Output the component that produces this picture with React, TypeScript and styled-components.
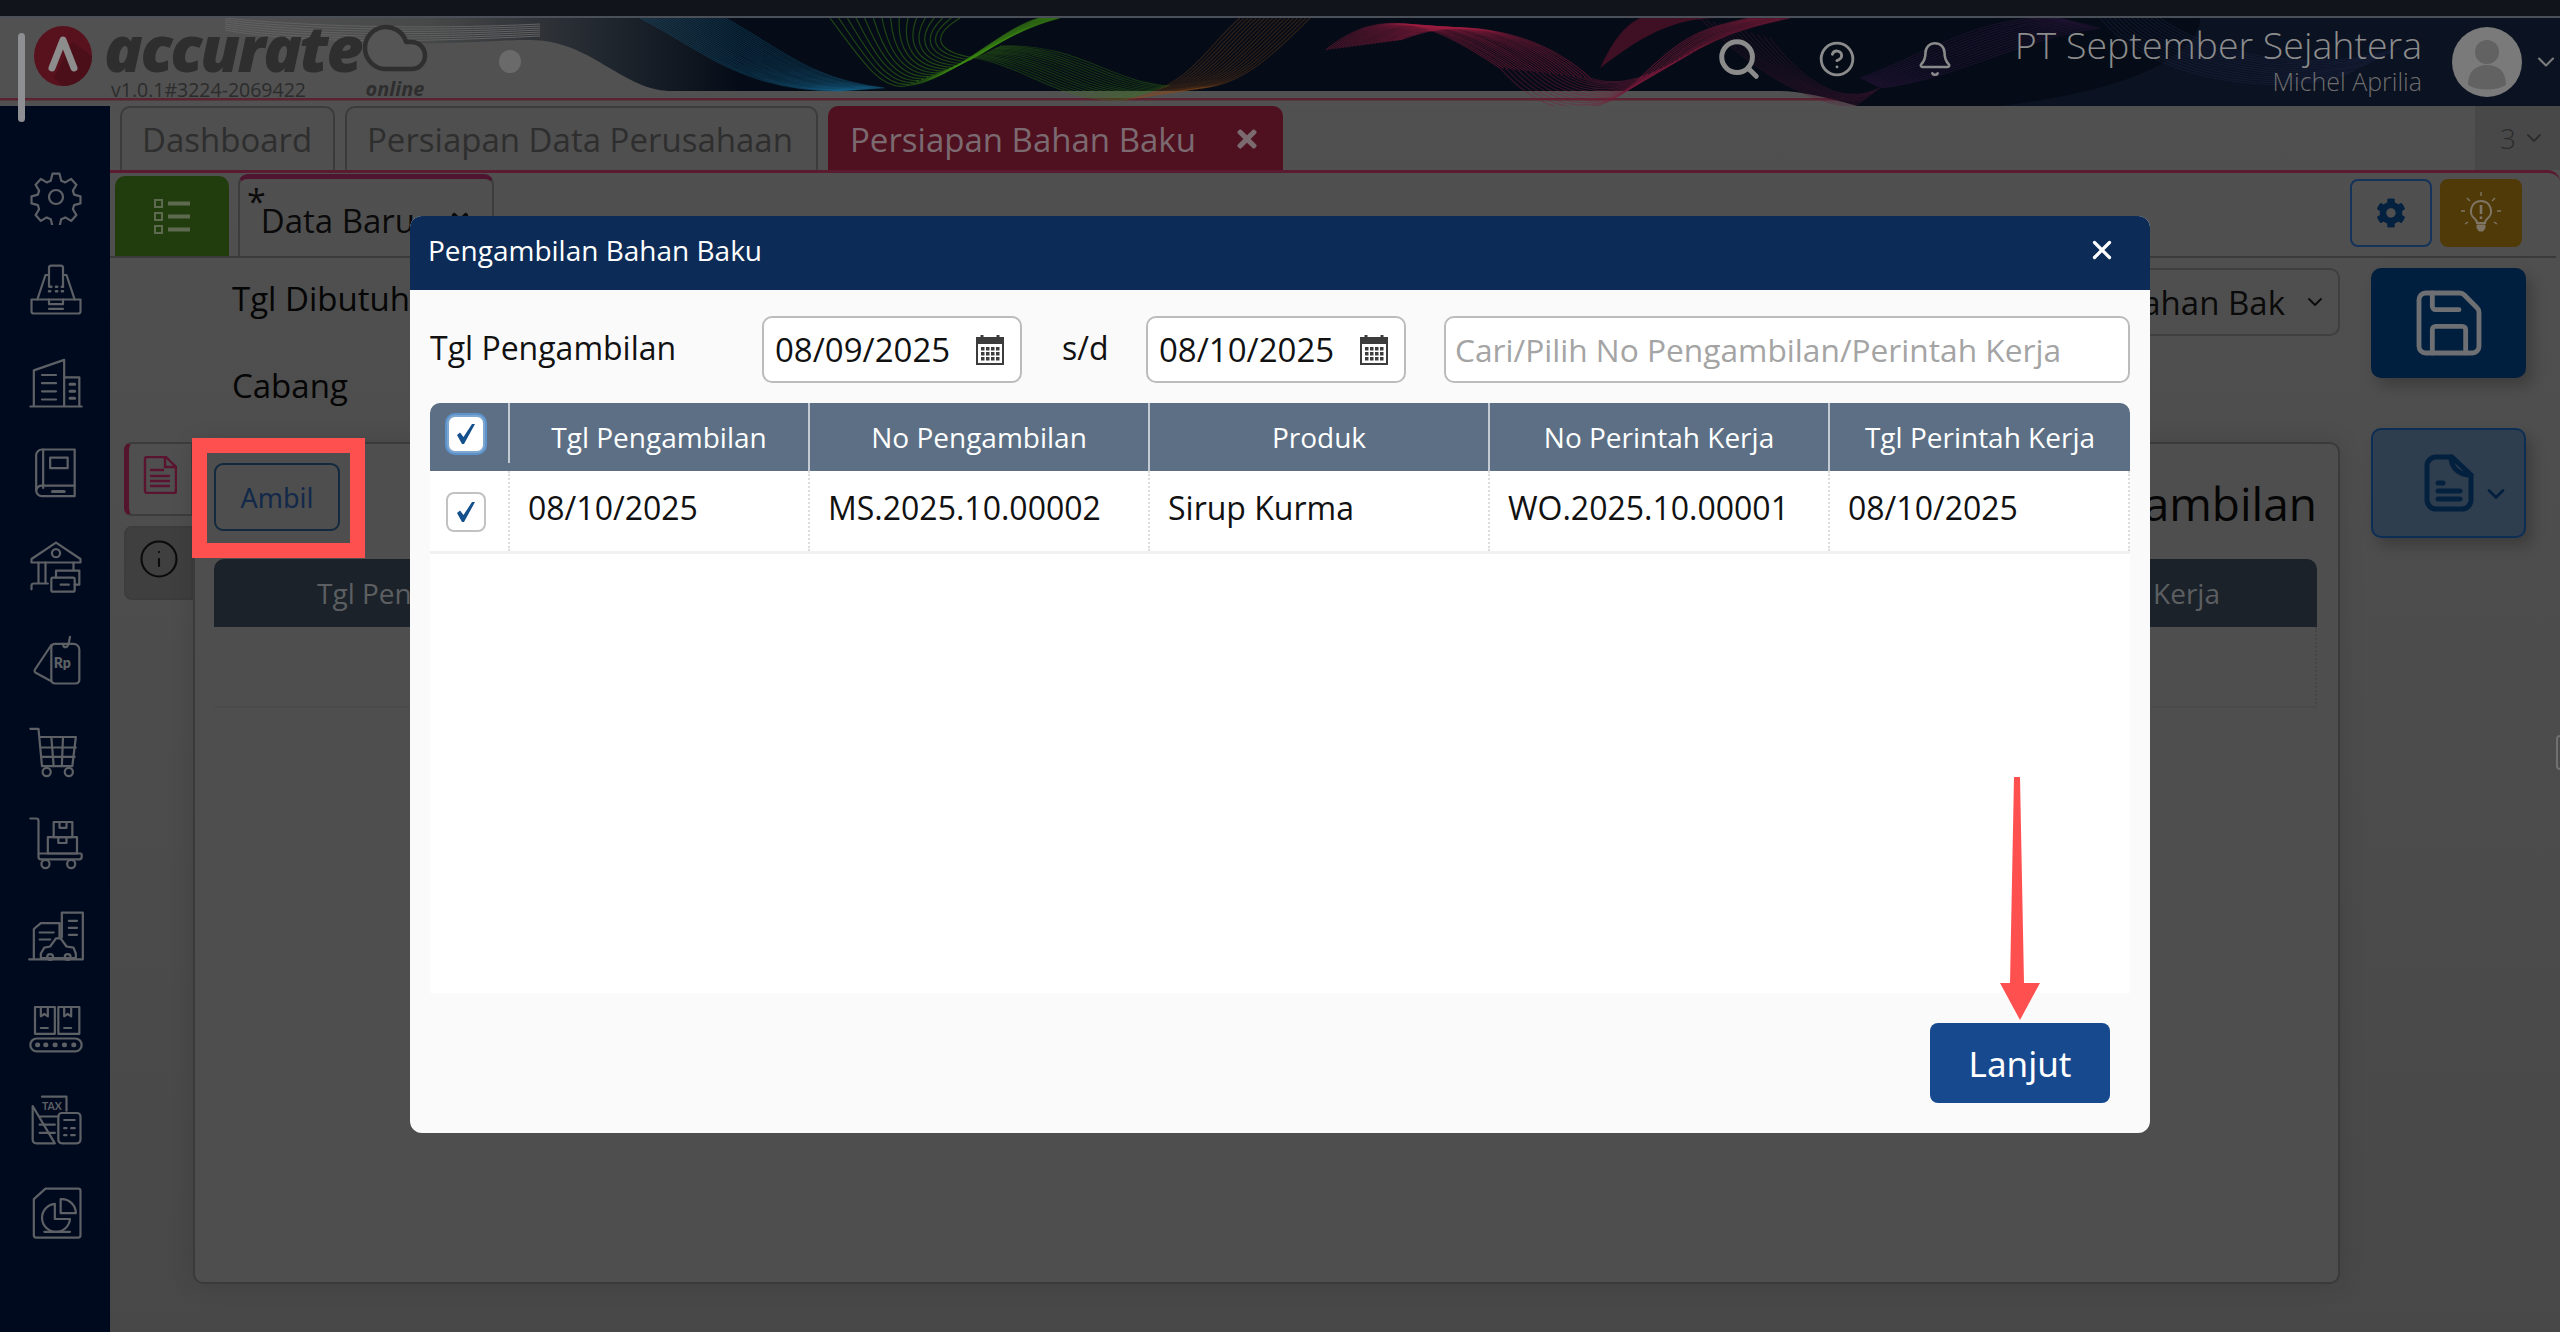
import React from "react";
import styled, { createGlobalStyle } from "styled-components";
import { Search, CircleHelp, Bell, ChevronDown, Save, Info, X, Cloud } from "lucide-react";
import { FaCog, FaTimes } from "react-icons/fa";

const GlobalStyle = createGlobalStyle`
  html, body {
    margin: 0;
    padding: 0;
    background: #fff;
    font-family: "Open Sans", "Noto Sans", sans-serif;
  }
  * { box-sizing: border-box; }
`;

const Page = styled.div`
  position: relative;
  width: 2560px;
  height: 1340px;
  overflow: hidden;
  display: flex;
  flex-direction: column;
  padding-bottom: 8px;
  background: #fff;
`;
const TopStrip = styled.div`
  height: 18px;
  flex: none;
  background: #12141b;
  border-bottom: 2px solid #4b5058;
`;
const Header = styled.header`
  position: relative;
  height: 88px;
  flex: none;
  display: flex;
  align-items: center;
  justify-content: space-between;
  background: #515151;
`;
const HeaderArt = styled.svg`
  position: absolute;
  inset: 0;
  width: 2560px;
  height: 88px;
`;
const LogoGroup = styled.div`
  position: relative;
  display: flex;
  align-items: flex-start;
  padding-left: 34px;
  height: 88px;
`;
const LogoMark = styled.svg`
  width: 58px;
  height: 60px;
  margin-top: 8px;
  flex: none;
`;
const LogoText = styled.div`
  margin-left: 12px;
  width: 258px;
`;
const LogoWord = styled.div`
  font-size: 64px;
  font-weight: 800;
  font-style: italic;
  line-height: 60px;
  height: 60px;
  margin-top: 0;
  color: #2e2e2e;
  letter-spacing: -2.4px;
`;
const Version = styled.div`
  font-size: 19.5px;
  font-weight: 400;
  line-height: 20px;
  margin: 2px 0 0 7px;
  color: #2c2c2c;
  white-space: nowrap;
`;
const CloudBlock = styled.div`
  margin: -6px 0 0 -4px;
  display: flex;
  flex-direction: column;
  align-items: center;
  width: 74px;
`;
const OnlineText = styled.div`
  font-size: 20px;
  font-weight: 700;
  font-style: italic;
  line-height: 18px;
  color: #2e2e2e;
  margin-top: -4px;
`;
const HeaderDot = styled.div`
  width: 22px;
  height: 23px;
  border-radius: 50%;
  background: #6a6a6a;
  margin: 32px 0 0 67px;
`;
const HeaderRight = styled.div`
  position: relative;
  display: flex;
  align-items: center;
  height: 88px;
`;
const HeaderIcon = styled.div<{ $gap: number }>`
  display: flex;
  color: #8b8b8b;
  margin: -6px ${(p) => p.$gap}px 0 0;
`;
const Company = styled.div`
  text-align: right;
  width: 408px;
  margin: -8px 30px 0 0;
`;
const CompanyName = styled.div`
  font-size: 37.5px;
  font-weight: 300;
  line-height: 46px;
  color: #8c8c8c;
  white-space: nowrap;
`;
const UserName = styled.div`
  font-size: 25px;
  font-weight: 300;
  line-height: 26px;
  color: #6e6e6e;
`;
const Avatar = styled.svg`
  width: 70px;
  height: 70px;
  margin-right: 10px;
`;
const HeaderChevron = styled.div`
  display: flex;
  color: #7c7c7c;
`;

const Body = styled.div`
  flex: 1;
  display: flex;
  min-height: 0;
`;
const Sidebar = styled.nav`
  width: 110px;
  flex: none;
  background: #000a1f;
  padding: 45px 0 0 2px;
`;
const SideItem = styled.div`
  height: 92.3px;
  display: flex;
  align-items: center;
  justify-content: center;
`;
const SideIcon = styled.svg`
  width: 56px;
  height: 56px;
  fill: none;
  stroke: #5d6064;
  stroke-width: 1.9;
  stroke-linecap: round;
  stroke-linejoin: round;
`;

const Main = styled.main`
  flex: 1;
  min-width: 0;
  display: flex;
  flex-direction: column;
  background: linear-gradient(#505050, #484848);
`;
const TabBar = styled.div`
  position: relative;
  height: 64px;
  flex: none;
  display: flex;
  gap: 10px;
  padding-left: 10px;
`;
const TopTab = styled.div<{ $active?: boolean; $width: number }>`
  width: ${(p) => p.$width}px;
  display: flex;
  align-items: center;
  justify-content: space-between;
  padding: 0 20px 0 20px;
  font-size: 33px;
  border-radius: 10px 10px 0 0;
  white-space: nowrap;
  color: ${(p) => (p.$active ? "#7b6a70" : "#2e2e2e")};
  background: ${(p) => (p.$active ? "#4f1120" : "#4f4f4f")};
  border: 2px solid ${(p) => (p.$active ? "#4f1120" : "#3b3b3b")};
  border-bottom: none;
`;
const TabCount = styled.div`
  position: absolute;
  right: 0;
  top: 0;
  bottom: 0;
  width: 85px;
  display: flex;
  align-items: center;
  gap: 6px;
  padding-left: 25px;
  font-size: 28px;
  font-weight: 300;
  color: #2c2c2c;
  background: #484848;
`;
const Frame = styled.div`
  flex: 1;
  min-height: 0;
  display: flex;
  flex-direction: column;
  border-top: 3px solid #5a1b30;
  border-top-right-radius: 12px;
`;
const SubBar = styled.div`
  height: 85px;
  flex: none;
  display: flex;
  align-items: flex-end;
  justify-content: space-between;
  padding: 0 34px 0 5px;
  border-bottom: 2px solid #3a3a3a;
  margin-right: 4px;
`;
const SubTabs = styled.div`
  display: flex;
  align-items: flex-end;
  gap: 9px;
`;
const ListButton = styled.div`
  width: 114px;
  height: 80px;
  background: #223d0d;
  border-radius: 10px 10px 0 0;
  display: flex;
  align-items: center;
  justify-content: center;
`;
const DataTab = styled.div`
  width: 256px;
  height: 82px;
  border: 2px solid #3c3c3c;
  border-top: 5px solid #4e1430;
  border-bottom: none;
  border-radius: 10px 10px 0 0;
  display: flex;
  align-items: center;
  gap: 20px;
  padding: 6px 0 0 7px;
  font-size: 33px;
  color: #0a0a0a;
  white-space: nowrap;
`;
const Asterisk = styled.span`
  align-self: flex-start;
  margin: -6px -25px 0 0;
  font-size: 34px;
  line-height: 44px;
`;
const DataTabClose = styled(FaTimes)`
  flex: none;
  margin-left: 13px;
`;
const ToolGroup = styled.div`
  display: flex;
  gap: 8px;
  padding-bottom: 9px;
`;
const ToolButton = styled.div<{ $fill?: string }>`
  width: 82px;
  height: 68px;
  border-radius: 8px;
  display: flex;
  align-items: center;
  justify-content: center;
  border: 2px solid ${(p) => p.$fill ?? "#14335a"};
  background: ${(p) => p.$fill ?? "transparent"};
  color: ${(p) => (p.$fill ? "#7f7564" : "#04213f")};
`;
const Content = styled.div`
  flex: 1;
  min-height: 0;
  display: flex;
  padding-top: 10px;
`;
const LeftColumn = styled.div`
  width: 2230px;
  flex: none;
`;
const FormRow = styled.div`
  position: relative;
  height: 174px;
  padding: 8px 0 0 122px;
  font-size: 33px;
  color: #050505;
`;
const FormLabel = styled.div`
  height: 46px;
  line-height: 46px;
  margin-bottom: 41px;
  white-space: nowrap;
`;
const SelectBox = styled.div`
  position: absolute;
  right: 0;
  top: 0;
  width: 500px;
  height: 68px;
  border: 2px solid #3f3f3f;
  border-radius: 10px;
  display: flex;
  align-items: center;
  justify-content: flex-end;
  gap: 18px;
  padding-right: 11px;
  font-size: 33px;
  color: #0a0a0a;
  white-space: nowrap;
`;
const CardRow = styled.div`
  display: flex;
  padding-left: 14px;
`;
const SideTabs = styled.div`
  width: 69px;
  flex: none;
  display: flex;
  flex-direction: column;
  gap: 10px;
`;
const SideTab = styled.div<{ $active?: boolean }>`
  height: 74px;
  display: flex;
  align-items: center;
  justify-content: center;
  padding-bottom: 8px;
  border-radius: 8px 0 0 8px;
  border: 2px solid #3c3c3c;
  border-left: ${(p) => (p.$active ? "5px solid #54142c" : "2px solid #3c3c3c")};
  background: ${(p) => (p.$active ? "#4f4f4f" : "#3f3f3f")};
  color: #0a0a0a;
`;
const Card = styled.section`
  flex: 1;
  height: 842px;
  padding: 19px 21px 0 19px;
  background: #4e4e4e;
  border: 2px solid #3a3a3a;
  border-radius: 10px;
  box-shadow: 0 0 24px rgba(0, 0, 0, 0.12);
`;
const CardTop = styled.div`
  display: flex;
  align-items: center;
  justify-content: space-between;
  height: 68px;
  margin-bottom: 28px;
`;
const AmbilButton = styled.div`
  width: 126px;
  height: 68px;
  border: 2px solid #13293f;
  border-radius: 9px;
  display: flex;
  align-items: center;
  justify-content: center;
  font-size: 27px;
  color: #13294a;
  font-family: "Noto Sans", sans-serif;
`;
const CardTitle = styled.div`
  font-size: 46px;
  color: #050505;
  white-space: nowrap;
  margin-top: 12px;
`;
const DarkHeader = styled.div`
  height: 68px;
  background: #1c2229;
  border-radius: 10px 10px 0 0;
  display: flex;
  align-items: center;
  justify-content: space-between;
  padding: 0 97px 0 103px;
  font-size: 28px;
  color: #5c5f62;
`;
const EmptyRow = styled.div`
  height: 81px;
  border-right: 2px dotted #454545;
  border-bottom: 2px solid #4a4a4a;
`;
const ActionColumn = styled.div`
  margin-left: 31px;
  width: 155px;
  display: flex;
  flex-direction: column;
  gap: 50px;
`;
const ActionButton = styled.div<{ $light?: boolean }>`
  height: 110px;
  border-radius: 10px;
  display: flex;
  align-items: center;
  justify-content: ${(p) => (p.$light ? "flex-start" : "center")};
  gap: 8px;
  padding-left: ${(p) => (p.$light ? 51 : 0)}px;
  background: ${(p) => (p.$light ? "#2f3e4e" : "#001f3f")};
  border: 2px solid ${(p) => (p.$light ? "#0c2e55" : "#001f3f")};
  color: ${(p) => (p.$light ? "#03203f" : "#6d6f72")};
  box-shadow: 6px 8px 14px rgba(0, 0, 0, 0.22);
`;
const ActionChevron = styled.div`
  display: flex;
  margin-top: 22px;
`;

const Modal = styled.div`
  position: absolute;
  left: 410px;
  top: 216px;
  width: 1740px;
  height: 917px;
  border-radius: 12px;
  overflow: hidden;
  background: #fafafa;
  display: flex;
  flex-direction: column;
`;
const ModalHeader = styled.div`
  height: 74px;
  flex: none;
  background: #0c2b57;
  color: #fff;
  display: flex;
  align-items: center;
  justify-content: space-between;
  padding: 0 33px 6px 18px;
  font-size: 28px;
`;
const ModalBody = styled.div`
  flex: 1;
  padding: 26px 20px 0;
`;
const FilterRow = styled.div`
  display: flex;
  align-items: center;
  height: 67px;
  margin-bottom: 20px;
  font-size: 32px;
  color: #111;
`;
const FilterLabel = styled.div<{ $width: number; $pad?: number }>`
  width: ${(p) => p.$width}px;
  padding-left: ${(p) => p.$pad ?? 0}px;
  flex: none;
  white-space: nowrap;
  margin-top: -4px;
`;
const DateField = styled.div`
  width: 260px;
  height: 67px;
  flex: none;
  background: #fff;
  border: 2px solid #bcbcbc;
  border-radius: 10px;
  display: flex;
  align-items: center;
  justify-content: space-between;
  padding: 0 16px 0 11px;
  font-size: 33px;
  color: #111;
`;
const SearchField = styled.div`
  flex: 1;
  height: 67px;
  margin-left: 38px;
  background: #fff;
  border: 2px solid #bcbcbc;
  border-radius: 10px;
  display: flex;
  align-items: center;
  padding-left: 9px;
  font-size: 31.7px;
  color: #a4a4a4;
  white-space: nowrap;
`;
const TableWrap = styled.div`
  height: 590px;
  background: #fff;
`;
const Grid = styled.div`
  display: grid;
  grid-template-columns: 80px 300px 340px 340px 340px 300px;
`;
const HeadRow = styled(Grid)`
  height: 68px;
  background: #5c6f84;
  border-radius: 10px 10px 0 0;
`;
const HeadCell = styled.div`
  display: flex;
  align-items: center;
  justify-content: center;
  font-size: 28px;
  color: #fff;
  white-space: nowrap;
  position: relative;
  border-right: 2px solid #c3cad2;
  &:last-child { border-right: none; }
`;
const HeadCheckCell = styled(HeadCell)`
  border-right: none;
  padding: 0 8px 6px 0;
  &::after {
    content: "";
    position: absolute;
    right: 0;
    top: 0;
    height: 60px;
    border-right: 2px solid #c3cad2;
  }
`;
const DataRow = styled(Grid)`
  height: 83px;
  border-bottom: 3px solid #f1f1f1;
`;
const DataCell = styled.div`
  display: flex;
  align-items: center;
  padding: 0 0 8px 18px;
  font-size: 32px;
  color: #111;
  white-space: nowrap;
  border-right: 2px dotted #dcdcdc;
`;
const CheckCell = styled(DataCell)`
  padding: 2px 0 0 16px;
`;
const CheckBox = styled.div<{ $focus?: boolean }>`
  width: ${(p) => (p.$focus ? 38 : 40)}px;
  height: ${(p) => (p.$focus ? 38 : 40)}px;
  border-radius: 8px;
  background: #fff;
  border: 2px solid ${(p) => (p.$focus ? "#7fa6cf" : "#c2c2c2")};
  box-shadow: ${(p) => (p.$focus ? "0 0 0 2px #5d93cc" : "none")};
  display: flex;
  align-items: center;
  justify-content: center;
`;
const ModalFooter = styled.div`
  display: flex;
  justify-content: flex-end;
  padding: 30px 20px 0 0;
`;
const PrimaryButton = styled.div`
  width: 180px;
  height: 80px;
  background: #17498f;
  border-radius: 8px;
  color: #fff;
  font-family: "Noto Sans", sans-serif;
  font-size: 35px;
  display: flex;
  align-items: center;
  justify-content: center;
`;

const ScrollThumb = styled.div`
  position: absolute;
  left: 18px;
  top: 33px;
  width: 7px;
  height: 89px;
  border-radius: 4px;
  background: #8e8f92;
`;
const HighlightBox = styled.div`
  position: absolute;
  left: 192px;
  top: 438px;
  width: 173px;
  height: 120px;
  border: 15px solid #ff5050;
`;
const ArrowMark = styled.svg`
  position: absolute;
  left: 1990px;
  top: 777px;
  width: 60px;
  height: 245px;
`;
const EdgeHandle = styled.div`
  position: absolute;
  right: -6px;
  top: 735px;
  width: 10px;
  height: 35px;
  border: 2px solid #707070;
  border-radius: 4px;
`;

type Band = { a: number[]; b: number[]; color: string; n: number; op: number };

const bands: Band[] = [
  { a: [640, 0, 700, 30, 740, 73, 840, 73], b: [725, 0, 780, 30, 810, 62, 885, 70], color: "#1c6f9d", n: 26, op: 0.3 },
  { a: [830, 0, 860, 40, 880, 72, 905, 68], b: [960, 0, 930, 18, 935, 34, 975, 40], color: "#3f8a14", n: 16, op: 0.45 },
  { a: [905, 68, 950, 65, 1000, 10, 1040, 0], b: [975, 40, 990, 30, 1020, 10, 1060, 0], color: "#3f8a14", n: 14, op: 0.45 },
  { a: [975, 40, 1030, 50, 1060, 85, 1125, 82], b: [1000, 28, 1080, 25, 1110, 65, 1170, 68], color: "#3a7a14", n: 16, op: 0.35 },
  { a: [1240, 0, 1205, 30, 1190, 70, 1125, 82], b: [1310, 0, 1270, 40, 1240, 68, 1200, 70], color: "#8f4c1a", n: 18, op: 0.3 },
  { a: [1326, 32, 1385, -18, 1440, 10, 1500, 50], b: [1400, 22, 1480, -10, 1560, 30, 1590, 60], color: "#a01f42", n: 24, op: 0.42 },
  { a: [1500, 50, 1540, 95, 1590, 110, 1640, 60], b: [1590, 60, 1620, 70, 1650, 60, 1700, 30], color: "#7a1c3c", n: 16, op: 0.4 },
  { a: [1640, 60, 1680, 20, 1700, 10, 1750, 0], b: [1700, 30, 1720, 20, 1740, 10, 1790, 0], color: "#a01f42", n: 12, op: 0.45 },
  { a: [1770, 20, 1800, 60, 1840, 90, 1880, 70], b: [1700, 0, 1760, 60, 1820, 90, 1857, 88], color: "#5a1c3c", n: 12, op: 0.3 },
  { a: [1880, 70, 1960, 60, 2020, 20, 2100, 10], b: [1860, 60, 1920, 40, 1980, -5, 2060, 0], color: "#3a1a4a", n: 14, op: 0.4 },
  { a: [2100, 0, 2140, 50, 2240, 80, 2340, 60], b: [2160, 0, 2200, 30, 2300, 60, 2400, 30], color: "#20284a", n: 14, op: 0.4 },
];

const bandPath = (band: Band, t: number) => {
  const p = band.a.map((v, i) => v + (band.b[i] - v) * t);
  return `M${p[0]} ${p[1]}C${p[2]} ${p[3]} ${p[4]} ${p[5]} ${p[6]} ${p[7]}`;
};

const WaveArt = () => (
  <HeaderArt viewBox="0 0 2560 88">
    <defs>
      <linearGradient id="bannerFade" gradientUnits="userSpaceOnUse" x1="220" y1="0" x2="740" y2="0">
        <stop offset="0" stopColor="#515151" />
        <stop offset="0.4" stopColor="#474848" />
        <stop offset="0.75" stopColor="#20262e" />
        <stop offset="1" stopColor="#050c17" />
      </linearGradient>
    </defs>
    <rect x="0" y="80" width="1860" height="2.5" fill="#5b2230" />
    <path
      d="M220 0L2560 0L2560 88L1857 88C1830 80 1800 73 1780 73L668 73C620 70 590 22 530 22C480 22 430 30 380 22C320 12 260 4 220 0Z"
      fill="url(#bannerFade)"
    />
    <path d="M2200 0L2560 0L2560 88L2000 88C2150 70 2200 30 2200 0Z" fill="#0d1426" opacity="0.75" />
    <path d="M1600 50C1640 20 1670 0 1720 0L1640 0C1620 10 1610 30 1600 50Z" fill="#3f1024" />
    {bands.map((band, i) =>
      Array.from({ length: band.n }, (_, k) => (
        <path
          key={`${i}-${k}`}
          d={bandPath(band, k / (band.n - 1))}
          fill="none"
          stroke={band.color}
          strokeOpacity={band.op}
          strokeWidth="1.2"
        />
      ))
    )}
    {[0, 1, 2, 3, 4, 5, 6].map((k) => (
      <path
        key={k}
        d={`M225 ${k * 2}C300 ${k * 3 + 8} 420 ${k * 2 + 12} 540 ${k * 2 + 6}`}
        fill="none"
        stroke="#626262"
        strokeWidth="1"
      />
    ))}
  </HeaderArt>
);

const sideIcons: React.ReactNode[] = [
  <>
    <path d="M21 4h6l1.500 6 3.500 1.500 5-3 4.500 5-3 5 1 3.500 5.500 1.500v6l-5.500 1.500-1 3.500 3 5-4.500 5-5-3-3.500 1.500-1.500 6h-6l-1.500-6-3.500-1.500-5 3-4.500-5 3-5-1-3.500-5.500-1.500v-6l5.500-1.500 1-3.500-3-5 4.500-5 5 3 3.500-1.500z" />
    <circle cx="24" cy="24" r="6" />
  </>,
  <>
    <path d="M18 22V6a2 2 0 0 1 2-2h8a2 2 0 0 1 2 2v16" />
    <path d="M18 12h-3L8 33M30 12h3l7 21" />
    <path d="M3 33h42v10a2 2 0 0 1-2 2H5a2 2 0 0 1-2-2z" />
    <path d="M18 33v4h12v-4M18 41h12" />
    <path d="M19 22h1M24 22h1M29 22h1M18 26h1M24 26h1M29 26h1" strokeWidth="2.2" />
  </>,
  <>
    <path d="M2 45h44M5 45V14l26-9v40M31 20h13v25" />
    <path d="M12 18h12M12 25h12M12 32h12M12 39h12" />
    <path d="M36 26h4M36 32h4M36 38h4" strokeWidth="2.6" />
  </>,
  <>
    <path d="M12 3h28v40H12a5 5 0 0 1-5-5V8a5 5 0 0 1 5-5z" />
    <path d="M13 3v33M7 38a5 5 0 0 1 5-4h28" />
    <rect x="19" y="10" width="15" height="9" />
    <path d="M21 39h10" strokeWidth="2.6" />
  </>,
  <>
    <path d="M3 18L24 4l21 14v3H3z" />
    <circle cx="24" cy="13" r="3.500" />
    <path d="M9 21v18M15 21v18M3 44v-3a2 2 0 0 1 2-2h12M39 21v6" />
    <rect x="20" y="34" width="20" height="12" rx="1.500" />
    <path d="M24 34v-6h20v12h-4M28 40h7" />
  </>,
  <>
    <path d="M18 14a3 3 0 0 1 3-3h16a5 5 0 0 1 5 5v26a3 3 0 0 1-3 3H21a3 3 0 0 1-3-3z" transform="translate(2 0)" />
    <path d="M20 12L6 33a2 2 0 0 0 1 3l13 7" />
    <path d="M30 11c0 4 4 4 5-1l1-5" />
    <text x="22" y="32" fontSize="12" fontWeight="800" fill="#5d6064" stroke="none" fontFamily="Lato, sans-serif">Rp</text>
  </>,
  <>
    <path d="M2 5h7l3 32h26l3-25H10" />
    <path d="M11 21h30M12 29h28M20 12l2 25M30 12l-1 25" />
    <circle cx="16" cy="42" r="3.500" />
    <circle cx="35" cy="42" r="3.500" />
  </>,
  <>
    <path d="M2 3h5a2 2 0 0 1 2 2v31a2 2 0 0 0 2 2h33a2 2 0 0 0 2-2v-2a1 1 0 0 0-1-1H9" />
    <rect x="17" y="19" width="25" height="14" />
    <rect x="22" y="6" width="16" height="13" />
    <path d="M27 6v5h6V6M26 19v5h7v-5" />
    <circle cx="15" cy="42" r="3.500" />
    <circle cx="37" cy="42" r="3.500" />
  </>,
  <>
    <path d="M1 44h46M5 44V18l6-5h16v12M29 25V4h18v40" />
    <path d="M10 21h12M10 27h9M35 11h7M35 17h7M35 23h7" />
    <path d="M11 43v-4l3-5 5-1 5-7h4l5 7 6 1 2 5v4z" />
    <circle cx="19" cy="42" r="2.500" />
    <circle cx="34" cy="42" r="2.500" />
  </>,
  <>
    <rect x="6" y="6" width="17" height="23" />
    <rect x="26" y="6" width="18" height="23" />
    <path d="M11 6v8l3-2 3 2V6M31 6v8l3-2 3 2V6M11 24h6M31 24h6" />
    <rect x="2" y="33" width="44" height="11" rx="5.500" />
    <path d="M8 38.500h.5M15 38.500h.5M23 38.500h.5M31 38.500h.5M39 38.500h.5" strokeWidth="4" />
  </>,
  <>
    <path d="M12 4h21v12M23 44H7a3 3 0 0 1-3-3V12z" />
    <text x="12" y="15" fontSize="9" fontWeight="700" fill="#5d6064" stroke="none" fontFamily="Lato, sans-serif">TAX</text>
    <path d="M10 21h16M10 28h13M10 35h13" />
    <rect x="26" y="18" width="19" height="26" rx="3" />
    <path d="M31 24h9M31 31h2M37 31h3M31 37h2M37 37h3" />
  </>,
  <>
    <path d="M15 4h28a2 2 0 0 1 2 2v38a2 2 0 0 1-2 2H7a2 2 0 0 1-2-2V13z" />
    <path d="M23 17a12 12 0 1 0 13 13H23z" />
    <path d="M28 13a12 12 0 0 1 13 12H28z" />
    <path d="M14 41h22" />
  </>,
];

const CalendarIcon = () => (
  <svg width="28" height="30" viewBox="0 0 28 30">
    <rect x="1" y="3" width="26" height="26" fill="#fff" stroke="#3c3c3c" strokeWidth="2" />
    <rect x="1" y="2" width="26" height="7" fill="#3c3c3c" />
    <path d="M6 0v4M22 0v4" stroke="#3c3c3c" strokeWidth="3" />
    {[12, 17, 22].map((y) =>
      [5, 10, 15, 20].map((x) => <rect key={`${x}-${y}`} x={x} y={y} width="3.500" height="3.500" fill="#3c3c3c" />)
    )}
  </svg>
);

const CheckMark = () => (
  <svg width="24" height="24" viewBox="0 0 24 24">
    <path d="M3 13l3-2.500 3.500 4.500L18 2h3L10 22H8z" fill="#14508c" />
  </svg>
);

const BulbIcon = () => (
  <svg width="46" height="46" viewBox="0 0 46 46" fill="none" stroke="#7f7564">
    <path d="M23 11a10 10 0 0 0-6 18c1.500 1.500 2 3 2 4h8c0-1 .5-2.500 2-4a10 10 0 0 0-6-18z" strokeWidth="2" />
    <path d="M19 35h8v3l-2 3h-4l-2-3z" fill="#7f7564" strokeWidth="1" />
    <path d="M23 15v9M23 26.500v2.500" strokeWidth="2.6" />
    <path d="M23 2v4M9 8l3 3M37 8l-3 3M3 21h4M39 21h4M7 34l3-2M39 34l-3-2" strokeWidth="1.4" />
  </svg>
);

const DocIcon = () => (
  <svg width="50" height="58" viewBox="0 0 50 58" fill="none" stroke="currentColor" strokeWidth="5" strokeLinecap="round" strokeLinejoin="round">
    <path d="M28 3H12a9 9 0 0 0-9 9v34a9 9 0 0 0 9 9h26a9 9 0 0 0 9-9V21z" />
    <path d="M27 3c0 11 8 18 20 18" />
    <path d="M14 29h5M14 37h22M14 45h22" />
  </svg>
);

const dataHeads = ["Tgl Pengambilan", "No Pengambilan", "Produk", "No Perintah Kerja", "Tgl Perintah Kerja"];
const dataRow = ["08/10/2025", "MS.2025.10.00002", "Sirup Kurma", "WO.2025.10.00001", "08/10/2025"];

export default function App() {
  return (
    <Page>
      <GlobalStyle />
      <TopStrip />
      <Header>
        <WaveArt />
        <LogoGroup>
          <LogoMark viewBox="0 0 58 60">
            <ellipse cx="29" cy="30" rx="29" ry="30" fill="#57121d" />
            <path d="M58 30A29 30 0 0 1 29 60L20 52 38 16z" fill="#4a0f19" />
            <path d="M18 42L29 14 40 42" fill="none" stroke="#8d8d8d" strokeWidth="7" strokeLinecap="round" strokeLinejoin="round" />
          </LogoMark>
          <LogoText>
            <LogoWord>accurate</LogoWord>
            <Version>v1.0.1#3224-2069422</Version>
          </LogoText>
          <CloudBlock>
            <Cloud size={72} strokeWidth={1.5} color="#2f2f2f" fill="#555" />
            <OnlineText>online</OnlineText>
          </CloudBlock>
          <HeaderDot />
        </LogoGroup>
        <HeaderRight>
          <HeaderIcon $gap={56}>
            <Search size={46} strokeWidth={2.6} />
          </HeaderIcon>
          <HeaderIcon $gap={60}>
            <CircleHelp size={38} strokeWidth={1.8} />
          </HeaderIcon>
          <HeaderIcon $gap={60}>
            <Bell size={38} strokeWidth={1.6} />
          </HeaderIcon>
          <Company>
            <CompanyName>PT September Sejahtera</CompanyName>
            <UserName>Michel Aprilia</UserName>
          </Company>
          <Avatar viewBox="0 0 70 70">
            <circle cx="35" cy="35" r="35" fill="#7a7a7a" />
            <circle cx="35" cy="25" r="12" fill="#626262" />
            <path d="M16 58c0-14 8-20 19-20s19 6 19 20c-10 6-28 6-38 0z" fill="#626262" />
          </Avatar>
          <HeaderChevron>
            <ChevronDown size={28} strokeWidth={1.8} />
          </HeaderChevron>
        </HeaderRight>
      </Header>
      <Body>
        <Sidebar>
          {sideIcons.map((icon, i) => (
            <SideItem key={i}>
              <SideIcon viewBox="0 0 48 48">{icon}</SideIcon>
            </SideItem>
          ))}
        </Sidebar>
        <Main>
          <TabBar>
            <TopTab $width={215}>Dashboard</TopTab>
            <TopTab $width={473}>Persiapan Data Perusahaan</TopTab>
            <TopTab $active $width={455}>
              Persiapan Bahan Baku
              <FaTimes size={28} />
            </TopTab>
            <TabCount>
              3 <ChevronDown size={24} strokeWidth={1.8} />
            </TabCount>
          </TabBar>
          <Frame>
            <SubBar>
              <SubTabs>
                <ListButton>
                  <svg width="36" height="36" viewBox="0 0 36 36" fill="none" stroke="#5d6a50">
                    <rect x="1" y="2" width="7" height="7" strokeWidth="2" />
                    <rect x="1" y="15" width="7" height="7" strokeWidth="2" />
                    <rect x="1" y="28" width="7" height="7" strokeWidth="2" />
                    <path d="M14 5.500h22M14 18.500h22M14 31.500h22" strokeWidth="4" />
                  </svg>
                </ListButton>
                <DataTab>
                  <Asterisk>*</Asterisk>
                  Data Baru
                  <DataTabClose size={24} />
                </DataTab>
              </SubTabs>
              <ToolGroup>
                <ToolButton>
                  <FaCog size={30} />
                </ToolButton>
                <ToolButton $fill="#4f3a08">
                  <BulbIcon />
                </ToolButton>
              </ToolGroup>
            </SubBar>
            <Content>
              <LeftColumn>
                <FormRow>
                  <FormLabel>Tgl Dibutuhkan</FormLabel>
                  <FormLabel>Cabang</FormLabel>
                  <SelectBox>
                    Persiapan Bahan Bak
                    <ChevronDown size={24} strokeWidth={1.8} />
                  </SelectBox>
                </FormRow>
                <CardRow>
                  <SideTabs>
                    <SideTab $active>
                      <svg width="34" height="38" viewBox="0 0 34 38" fill="none" stroke="#5a1430" strokeWidth="2.4">
                        <path d="M2 3a2 2 0 0 1 2-2h19l10 10v24a2 2 0 0 1-2 2H4a2 2 0 0 1-2-2z" />
                        <path d="M22 1v10h11M7 14h14M7 20h20M7 25h20M7 30h20" />
                      </svg>
                    </SideTab>
                    <SideTab>
                      <Info size={42} strokeWidth={1.2} />
                    </SideTab>
                  </SideTabs>
                  <Card>
                    <CardTop>
                      <AmbilButton>Ambil</AmbilButton>
                      <CardTitle>Pengambilan</CardTitle>
                    </CardTop>
                    <DarkHeader>
                      <span>Tgl Pengambilan</span>
                      <span>No Perintah Kerja</span>
                    </DarkHeader>
                    <EmptyRow />
                  </Card>
                </CardRow>
              </LeftColumn>
              <ActionColumn>
                <ActionButton>
                  <Save size={80} strokeWidth={1.45} />
                </ActionButton>
                <ActionButton $light>
                  <DocIcon />
                  <ActionChevron>
                    <ChevronDown size={28} strokeWidth={2.4} />
                  </ActionChevron>
                </ActionButton>
              </ActionColumn>
            </Content>
          </Frame>
        </Main>
      </Body>

      <Modal>
        <ModalHeader>
          Pengambilan Bahan Baku
          <X size={30} strokeWidth={2.6} />
        </ModalHeader>
        <ModalBody>
          <FilterRow>
            <FilterLabel $width={332}>Tgl Pengambilan</FilterLabel>
            <DateField>
              08/09/2025
              <CalendarIcon />
            </DateField>
            <FilterLabel $width={124} $pad={40}>
              s/d
            </FilterLabel>
            <DateField>
              08/10/2025
              <CalendarIcon />
            </DateField>
            <SearchField>Cari/Pilih No Pengambilan/Perintah Kerja</SearchField>
          </FilterRow>
          <TableWrap>
            <HeadRow>
              <HeadCheckCell>
                <CheckBox $focus>
                  <CheckMark />
                </CheckBox>
              </HeadCheckCell>
              {dataHeads.map((h) => (
                <HeadCell key={h}>{h}</HeadCell>
              ))}
            </HeadRow>
            <DataRow>
              <CheckCell>
                <CheckBox>
                  <CheckMark />
                </CheckBox>
              </CheckCell>
              {dataRow.map((v, i) => (
                <DataCell key={i}>{v}</DataCell>
              ))}
            </DataRow>
          </TableWrap>
          <ModalFooter>
            <PrimaryButton>Lanjut</PrimaryButton>
          </ModalFooter>
        </ModalBody>
      </Modal>

      <ScrollThumb />
      <EdgeHandle />
      <HighlightBox />
      <ArrowMark viewBox="0 0 60 245">
        <path d="M24 0h6l4 206h16l-20 37-20-37h10z" fill="#ff5050" />
      </ArrowMark>
    </Page>
  );
}
